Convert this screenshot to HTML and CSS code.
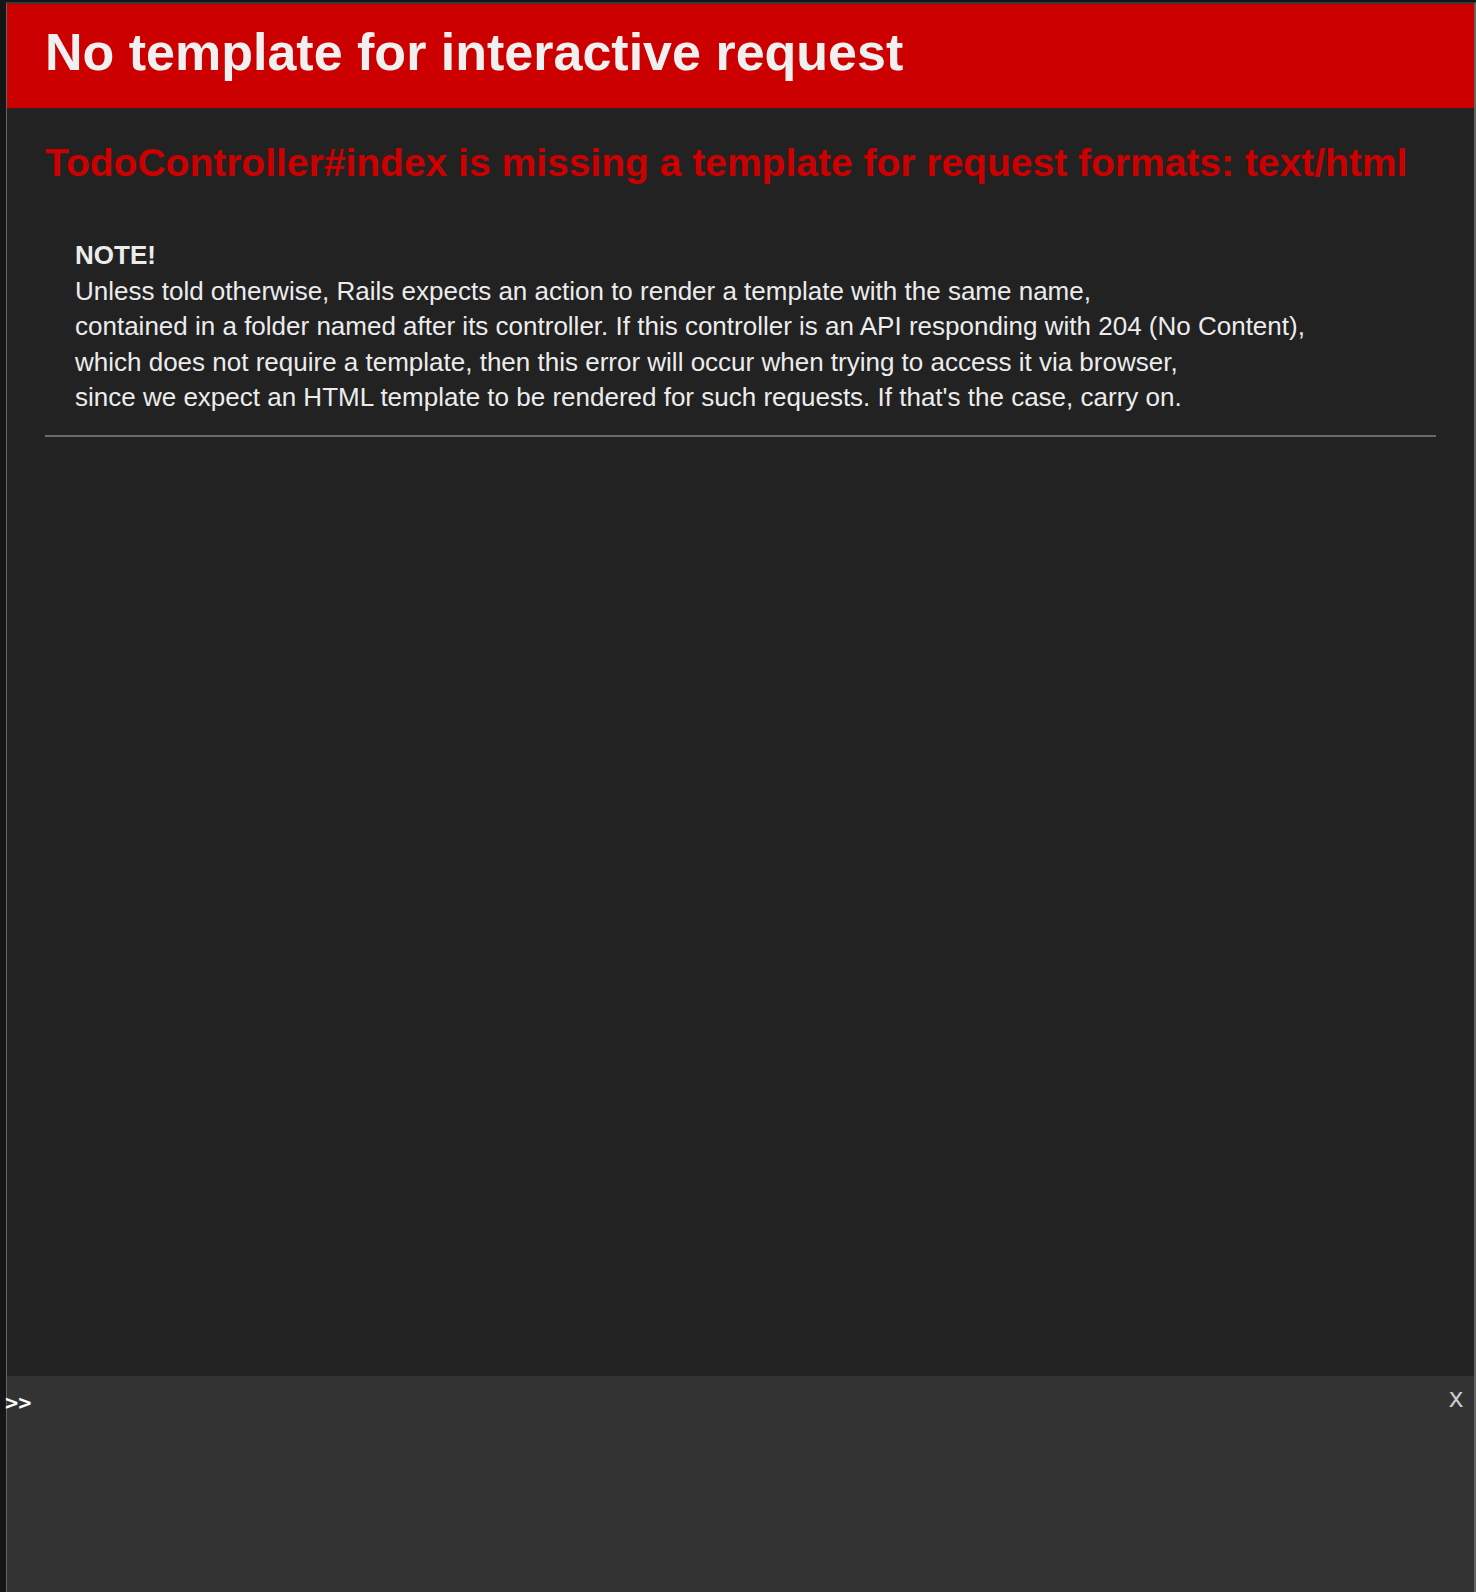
FILE: index.html
```
<!DOCTYPE html>
<html lang="en">
<head>
<meta charset="utf-8">
<title>Action Controller: Exception caught</title>
<link rel="stylesheet" href="styles.css">
</head>
<body>
<div class="window">
  <header class="banner">
    <h1 class="banner-title">No template for interactive request</h1>
  </header>
  <main class="container">
    <h2 class="message">TodoController#index is missing a template for request formats: text/html</h2>
    <p class="summary">
      <strong>NOTE!</strong><br>
      Unless told otherwise, Rails expects an action to render a template with the same name,<br>
      contained in a folder named after its controller. If this controller is an API responding with 204 (No Content),<br>
      which does not require a template, then this error will occur when trying to access it via browser,<br>
      since we expect an HTML template to be rendered for such requests. If that's the case, carry on.
    </p>
    <hr class="rule">
  </main>
  <div class="console">
    <div class="console-prompt">&gt;&gt;</div>
    <span class="close-button">x</span>
  </div>
</div>
</body>
</html>
```
FILE: styles.css
```
html, body {
  margin: 0;
  height: 100%;
}

body {
  background: #151515;
  padding: 2px 0 0 6px;
  box-sizing: border-box;
  display: flex;
  font-family: "Liberation Sans", Arial, Helvetica, sans-serif;
}

.window {
  flex: 1;
  display: flex;
  flex-direction: column;
  background: #222222;
  border-top: 2px solid #383838;
  border-left: 1px solid rgba(255, 255, 255, 0.3);
  border-right: 2px solid rgba(255, 255, 255, 0.3);
  min-width: 0;
}

.banner {
  background: #cc0000;
  color: #f0f0f0;
  padding: 20px 38px 27px;
}

.banner-title {
  margin: 0;
  font-size: 52px;
  line-height: 57px;
  font-weight: bold;
}

.container {
  flex: 1;
  padding: 0 38px;
}

.message {
  color: #cc0000;
  font-size: 39px;
  line-height: 50px;
  font-weight: bold;
  margin: 30px 0 0;
}

.summary {
  color: #ececec;
  font-size: 26px;
  line-height: 35.5px;
  margin: 50px 0 0;
  padding-left: 30px;
}

.rule {
  border: 0;
  border-top: 2px solid #6a6a6a;
  margin: 19px 0 0;
  height: 0;
}

.console {
  position: relative;
  height: 216px;
  background: #333333;
  flex: none;
}

.console-prompt {
  margin-left: -2px;
  padding-top: 16px;
  font-family: "DejaVu Sans Mono", "Liberation Mono", monospace;
  font-weight: bold;
  font-size: 22px;
  line-height: 22px;
  color: #ffffff;
}

.close-button {
  position: absolute;
  right: 4px;
  top: 8px;
  width: 28px;
  text-align: center;
  font-family: "DejaVu Sans Mono", "Liberation Mono", monospace;
  font-size: 26px;
  line-height: 28px;
  color: #cccccc;
}
```
